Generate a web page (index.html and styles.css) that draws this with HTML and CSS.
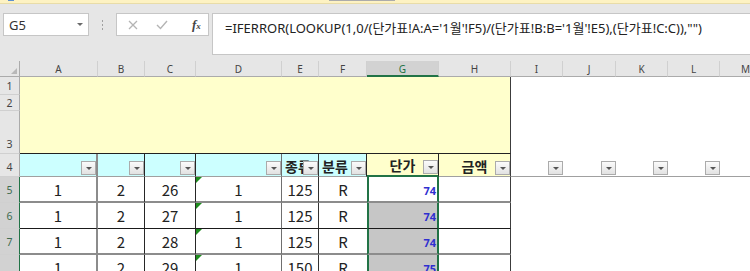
FILE: index.html
```html
<!DOCTYPE html>
<html lang="ko">
<head>
  <meta charset="UTF-8" />
  <title>1월 - Excel</title>
  <link rel="stylesheet" href="styles.css">
</head>
<body>
  <div class="topstrip">
    <span class="tab-mark"></span>
    <span class="scroll-mark"></span>
  </div>

  <div class="fbar">
    <div class="namebox">
      <span>G5</span>
      <span class="caret"></span>
    </div>
    <div class="grip"><i></i><i></i><i></i></div>
    <div class="fbtns">
      <svg class="ico-x" width="10" height="10" viewBox="0 0 10 10">
        <path d="M1 1 L9 9 M9 1 L1 9" stroke="#b4b4b4" stroke-width="1.3" fill="none"/>
      </svg>
      <svg class="ico-ok" width="12" height="10" viewBox="0 0 12 10">
        <path d="M1 5 L4.5 8.5 L11 1" stroke="#b4b4b4" stroke-width="1.4" fill="none"/>
      </svg>
      <span class="fx"><i>f</i><span>x</span></span>
    </div>
    <div class="formula">=IFERROR(LOOKUP(1,0/(단가표!A:A='1월'!F5)/(단가표!B:B='1월'!E5),(단가표!C:C)),"")</div>
  </div>

  <div class="sheet">
    <div class="corner"></div>
    <div class="colh">A</div>
    <div class="colh">B</div>
    <div class="colh">C</div>
    <div class="colh">D</div>
    <div class="colh">E</div>
    <div class="colh">F</div>
    <div class="colh sel">G</div>
    <div class="colh">H</div>
    <div class="colh">I</div>
    <div class="colh">J</div>
    <div class="colh">K</div>
    <div class="colh">L</div>
    <div class="colh">M</div>

    <div class="rowh">1</div>
    <div class="title-block"></div>
    <div class="blank"></div>
    <div class="rowh">2</div>
    <div class="rowh r3">3</div>

    <div class="row hdr">
      <div class="rowh r4">4</div>
      <div class="cell ca"><span class="fb"></span></div>
      <div class="cell cb"><span class="fb"></span></div>
      <div class="cell cc"><span class="fb"></span></div>
      <div class="cell cd"><span class="fb"></span></div>
      <div class="cell ce left">종류<span class="fb"></span></div>
      <div class="cell cf left">분류<span class="fb"></span></div>
      <div class="cell cg">단가<span class="fb"></span></div>
      <div class="cell chh">금액<span class="fb"></span></div>
      <div class="cell out"><span class="fb"></span></div>
      <div class="cell out"><span class="fb"></span></div>
      <div class="cell out"><span class="fb"></span></div>
      <div class="cell out"><span class="fb"></span></div>
      <div class="cell out"></div>
    </div>

    <div class="row data r5">
      <div class="rowh sel">5</div>
      <div class="cell ca">1</div>
      <div class="cell cb">2</div>
      <div class="cell cc">26</div>
      <div class="cell cd err">1</div>
      <div class="cell ce">125</div>
      <div class="cell cf">R</div>
      <div class="cell cg">74</div>
      <div class="cell chh"></div>
      <div class="cell out"></div>
      <div class="cell out"></div>
      <div class="cell out"></div>
      <div class="cell out"></div>
      <div class="cell out"></div>
    </div>

    <div class="row data r6">
      <div class="rowh sel">6</div>
      <div class="cell ca">1</div>
      <div class="cell cb">2</div>
      <div class="cell cc">27</div>
      <div class="cell cd err">1</div>
      <div class="cell ce">125</div>
      <div class="cell cf">R</div>
      <div class="cell cg shade">74</div>
      <div class="cell chh"></div>
      <div class="cell out"></div>
      <div class="cell out"></div>
      <div class="cell out"></div>
      <div class="cell out"></div>
      <div class="cell out"></div>
    </div>

    <div class="row data r7">
      <div class="rowh sel">7</div>
      <div class="cell ca">1</div>
      <div class="cell cb">2</div>
      <div class="cell cc">28</div>
      <div class="cell cd err">1</div>
      <div class="cell ce">125</div>
      <div class="cell cf">R</div>
      <div class="cell cg shade">74</div>
      <div class="cell chh"></div>
      <div class="cell out"></div>
      <div class="cell out"></div>
      <div class="cell out"></div>
      <div class="cell out"></div>
      <div class="cell out"></div>
    </div>

    <div class="row data r8">
      <div class="rowh sel">8</div>
      <div class="cell ca">1</div>
      <div class="cell cb">2</div>
      <div class="cell cc">29</div>
      <div class="cell cd err">1</div>
      <div class="cell ce">150</div>
      <div class="cell cf">R</div>
      <div class="cell cg shade">75</div>
      <div class="cell chh"></div>
      <div class="cell out"></div>
      <div class="cell out"></div>
      <div class="cell out"></div>
      <div class="cell out"></div>
      <div class="cell out"></div>
    </div>
  </div>
</body>
</html>
```

FILE: styles.css
```css
* {
  box-sizing: border-box;
}
body {
  margin: 0;
  width: 750px;
  height: 271px;
  overflow: hidden;
  background: #e6e6e6;
  font-family: "Noto Sans", "Noto Sans CJK KR", sans-serif;
  color: #222;
}

/* ribbon edge */
.topstrip {
  height: 4px;
  background: #fdf2c2;
  border-bottom: 1px solid #e8dca8;
  display: flex;
}
.tab-mark {
  width: 6px;
  height: 1px;
  margin-left: 8px;
  background: #5d8fcf;
}
.scroll-mark {
  width: 66px;
  height: 1px;
  margin-left: 315px;
  background: #ababab;
}

/* formula bar */
.fbar {
  height: 57px;
  padding-top: 9px;
  display: flex;
  align-items: flex-start;
}
.namebox {
  margin-left: 3px;
  width: 86px;
  height: 23px;
  border: 1px solid #c6c6c6;
  background: #fff;
  display: flex;
  align-items: center;
  justify-content: space-between;
  padding: 0 5px 0 5px;
  font-size: 13px;
  color: #333;
}
.caret {
  width: 0;
  height: 0;
  border-left: 3px solid transparent;
  border-right: 3px solid transparent;
  border-top: 3px solid #6a6a6a;
}
.grip {
  width: 27px;
  height: 23px;
  display: flex;
  flex-direction: column;
  align-items: center;
  justify-content: center;
  gap: 2px;
}
.grip i {
  width: 1px;
  height: 2px;
  background: #a0a0a0;
}
.fbtns {
  width: 93px;
  height: 23px;
  border: 1px solid #c6c6c6;
  background: #fff;
  display: flex;
  align-items: center;
}
.ico-x {
  margin-left: 11px;
}
.ico-ok {
  margin-left: 18px;
}
.fx {
  margin-left: 24px;
  font-family: "Liberation Serif", serif;
  font-weight: 700;
  color: #444;
  font-size: 13px;
}
.fx span {
  font-size: 9px;
  font-style: italic;
}
.formula {
  margin-left: 3px;
  flex: 1;
  height: 42px;
  border: 1px solid #c6c6c6;
  border-right: none;
  background: #fff;
  padding: 6px 0 0 12px;
  font-size: 13px;
  line-height: 17px;
  white-space: nowrap;
  color: #222;
}

/* sheet */
.sheet {
  display: grid;
  width: 772px;
  grid-template-columns: 20px 78px 47px 51px 86px 37px 48px 72px 72px 52px 53px 52px 52px 52px;
  grid-template-rows: 16px 18px 16px 43px 23px 26px 26px 26px 40px;
}
.row {
  display: contents;
}
.corner {
  position: relative;
  border-right: 1px solid #ababab;
  border-bottom: 1px solid #ababab;
}
.corner::after {
  content: "";
  position: absolute;
  right: 2px;
  bottom: 2px;
  border-left: 6px solid transparent;
  border-bottom: 6px solid #b8b8b8;
}
.colh {
  border-right: 1px solid #d0d0d0;
  border-bottom: 1px solid #ababab;
  font-size: 10px;
  color: #444;
  text-align: center;
  line-height: 15px;
  padding-top: 1px;
}
.colh.sel {
  background: #d2d2d2;
  color: #217346;
  border-bottom: 2px solid #217346;
}
.rowh {
  border-right: 1px solid #ababab;
  border-bottom: 1px solid #d0d0d0;
  font-size: 10.5px;
  color: #444;
  display: flex;
  align-items: center;
  justify-content: center;
}
.rowh.r3 {
  align-items: flex-end;
  padding-bottom: 2px;
}
.rowh.r4 {
  padding-top: 3px;
}
.rowh.sel {
  background: #d2d2d2;
  color: #3f6b4f;
  border-right: 1px solid #217346;
}
.data .rowh.sel {
  align-items: flex-start;
  padding-top: 6px;
}
.r8 .rowh.sel {
  padding-top: 26px;
}
.title-block {
  grid-column: span 8;
  grid-row: span 3;
  background: #ffffcc;
  border-right: 1px solid #3c3c3c;
  border-bottom: 1px solid #222;
}
.blank {
  grid-column: span 5;
  grid-row: span 3;
  background: #fff;
}

/* cells */
.cell {
  position: relative;
  background: #fff;
  display: flex;
  align-items: center;
  justify-content: center;
  font-family: "Noto Sans CJK KR", sans-serif;
  font-size: 15px;
  color: #222;
  white-space: nowrap;
}
.cell.left {
  justify-content: flex-start;
  padding-left: 3px;
}
.ca { border-right: 2px solid #8c8c8c; }
.cb { border-right: 1px solid #262626; }
.cc { border-right: 1px solid #262626; }
.cd { border-right: 1px solid #6f6f6f; }
.ce { border-right: 1px solid #333; }
.chh { border-right: 1px solid #3c3c3c; }

.hdr .cell {
  font-weight: 700;
  font-size: 14px;
  border-bottom: 1px solid #a0a0a0;
  background: #ccffff;
  padding-top: 1px;
}
.hdr .cf,
.hdr .cg {
  border-right: 1px solid #262626;
}
.hdr .cg,
.hdr .chh {
  background: #ffffcc;
}
.hdr .cg {
  border-bottom: 2px solid #217346;
}
.hdr .out {
  background: #fff;
}

.data .cell {
  align-items: flex-start;
  padding-top: 2px;
}
.r5 .cell:not(.out),
.r7 .cell:not(.out) {
  border-bottom: 2px solid #8c8c8c;
}
.r6 .cell:not(.out) {
  border-bottom: 1px solid #1a1a1a;
}
.data .cg {
  border-left: 2px solid #217346;
  border-right: 2px solid #217346;
  justify-content: flex-end;
  padding: 6px 1px 0 0;
  font-family: "Noto Sans", sans-serif;
  font-size: 11px;
  font-weight: 700;
  color: #2f2fd0;
}
.data .cg.shade {
  background: #c6c6c6;
}
.err::before {
  content: "";
  position: absolute;
  left: 0;
  top: 0;
  border-top: 6px solid #1e8c1e;
  border-right: 6px solid transparent;
}

/* autofilter button */
.fb {
  position: absolute;
  right: 0;
  bottom: 1px;
  width: 15px;
  height: 14px;
  border: 1px solid #ababab;
  background: linear-gradient(#fbfbfb, #e2e2e2);
}
.fb::after {
  content: "";
  position: absolute;
  left: 4px;
  top: 5px;
  border-left: 3px solid transparent;
  border-right: 3px solid transparent;
  border-top: 3px solid #555;
}
```
